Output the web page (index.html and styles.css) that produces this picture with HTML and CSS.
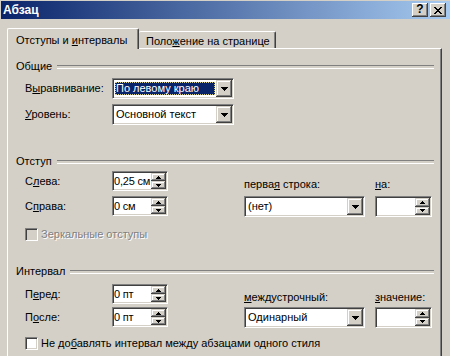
FILE: index.html
```html
<!DOCTYPE html>
<html lang="ru">
<head>
<meta charset="UTF-8">
<title>Абзац</title>
<link rel="stylesheet" href="styles.css">
</head>
<body>
<div class="window">
  <div class="titlebar">
    <span class="title">Абзац</span>
    <div class="caption-btns">
      <span class="cap-btn help">?</span>
      <span class="cap-btn close">
        <svg width="8" height="7" viewBox="0 0 8 7"><path d="M0 0h2v1H0z M6 0h2v1H6z M1 1h2v1H1z M5 1h2v1H5z M2 2h4v1H2z M3 3h2v1H3z M2 4h4v1H2z M1 5h2v1H1z M5 5h2v1H5z M0 6h2v1H0z M6 6h2v1H6z"/></svg>
      </span>
    </div>
  </div>

  <div class="tabs">
    <div class="tab active">Отступы и <u>и</u>нтервалы</div>
    <div class="tab">Поло<u>ж</u>ение на странице</div>
  </div>

  <div class="panel">
    <!-- Общие -->
    <div class="group-head"><span>Общие</span></div>
    <div class="fields fields-general">
      <span class="label">В<u>ы</u>равнивание:</span>
      <div class="combo">
        <span class="combo-text selected">По левому краю</span>
        <span class="drop-btn"><svg width="7" height="4" viewBox="0 0 7 4"><path d="M0 0h7v1H0z M1 1h5v1H1z M2 2h3v1H2z M3 3h1v1H3z"/></svg></span>
      </div>
      <span class="label"><u>У</u>ровень:</span>
      <div class="combo">
        <span class="combo-text">Основной текст</span>
        <span class="drop-btn"><svg width="7" height="4" viewBox="0 0 7 4"><path d="M0 0h7v1H0z M1 1h5v1H1z M2 2h3v1H2z M3 3h1v1H3z"/></svg></span>
      </div>
    </div>

    <!-- Отступ -->
    <div class="group-head group-indent"><span>Отступ</span></div>
    <div class="fields fields-pair fields-indent">
      <span class="label">С<u>л</u>ева:</span>
      <div class="spin">
        <span class="spin-text">0,25 см</span>
        <span class="spin-btns">
          <span class="spin-btn"><svg width="5" height="3" viewBox="0 0 5 3"><path d="M2 0h1v1H2z M1 1h3v1H1z M0 2h5v1H0z"/></svg></span>
          <span class="spin-btn"><svg width="5" height="3" viewBox="0 0 5 3"><path d="M0 0h5v1H0z M1 1h3v1H1z M2 2h1v1H2z"/></svg></span>
        </span>
      </div>
      <span class="label top-label col-combo">перва<u>я</u> строка:</span>
      <span class="label top-label col-spin"><u>н</u>а:</span>

      <span class="label">С<u>п</u>рава:</span>
      <div class="spin">
        <span class="spin-text">0 см</span>
        <span class="spin-btns">
          <span class="spin-btn"><svg width="5" height="3" viewBox="0 0 5 3"><path d="M2 0h1v1H2z M1 1h3v1H1z M0 2h5v1H0z"/></svg></span>
          <span class="spin-btn"><svg width="5" height="3" viewBox="0 0 5 3"><path d="M0 0h5v1H0z M1 1h3v1H1z M2 2h1v1H2z"/></svg></span>
        </span>
      </div>
      <div class="combo col-combo">
        <span class="combo-text">(нет)</span>
        <span class="drop-btn"><svg width="7" height="4" viewBox="0 0 7 4"><path d="M0 0h7v1H0z M1 1h5v1H1z M2 2h3v1H2z M3 3h1v1H3z"/></svg></span>
      </div>
      <div class="spin spin-tall col-spin">
        <span class="spin-text"></span>
        <span class="spin-btns">
          <span class="spin-btn"><svg width="5" height="3" viewBox="0 0 5 3"><path d="M2 0h1v1H2z M1 1h3v1H1z M0 2h5v1H0z"/></svg></span>
          <span class="spin-btn"><svg width="5" height="3" viewBox="0 0 5 3"><path d="M0 0h5v1H0z M1 1h3v1H1z M2 2h1v1H2z"/></svg></span>
        </span>
      </div>
    </div>
    <div class="check check-mirror disabled">
      <span class="box"></span>
      <span class="check-text">Зеркальные отступы</span>
    </div>

    <!-- Интервал -->
    <div class="group-head group-spacing"><span>Интервал</span></div>
    <div class="fields fields-pair fields-spacing">
      <span class="label">П<u>е</u>ред:</span>
      <div class="spin">
        <span class="spin-text">0 пт</span>
        <span class="spin-btns">
          <span class="spin-btn"><svg width="5" height="3" viewBox="0 0 5 3"><path d="M2 0h1v1H2z M1 1h3v1H1z M0 2h5v1H0z"/></svg></span>
          <span class="spin-btn"><svg width="5" height="3" viewBox="0 0 5 3"><path d="M0 0h5v1H0z M1 1h3v1H1z M2 2h1v1H2z"/></svg></span>
        </span>
      </div>
      <span class="label top-label col-combo"><u>м</u>еждустрочный:</span>
      <span class="label top-label col-spin"><u>з</u>начение:</span>

      <span class="label">П<u>о</u>сле:</span>
      <div class="spin">
        <span class="spin-text">0 пт</span>
        <span class="spin-btns">
          <span class="spin-btn"><svg width="5" height="3" viewBox="0 0 5 3"><path d="M2 0h1v1H2z M1 1h3v1H1z M0 2h5v1H0z"/></svg></span>
          <span class="spin-btn"><svg width="5" height="3" viewBox="0 0 5 3"><path d="M0 0h5v1H0z M1 1h3v1H1z M2 2h1v1H2z"/></svg></span>
        </span>
      </div>
      <div class="combo col-combo">
        <span class="combo-text">Одинарный</span>
        <span class="drop-btn"><svg width="7" height="4" viewBox="0 0 7 4"><path d="M0 0h7v1H0z M1 1h5v1H1z M2 2h3v1H2z M3 3h1v1H3z"/></svg></span>
      </div>
      <div class="spin spin-tall col-spin">
        <span class="spin-text"></span>
        <span class="spin-btns">
          <span class="spin-btn"><svg width="5" height="3" viewBox="0 0 5 3"><path d="M2 0h1v1H2z M1 1h3v1H1z M0 2h5v1H0z"/></svg></span>
          <span class="spin-btn"><svg width="5" height="3" viewBox="0 0 5 3"><path d="M0 0h5v1H0z M1 1h3v1H1z M2 2h1v1H2z"/></svg></span>
        </span>
      </div>
    </div>
    <div class="check check-style">
      <span class="box"></span>
      <span class="check-text">Не до<u>б</u>авлять интервал между абзацами одного стиля</span>
    </div>
  </div>
</div>
</body>
</html>
```

FILE: styles.css
```css
* {
  box-sizing: border-box;
}

html, body {
  margin: 0;
  padding: 0;
}

body {
  width: 450px;
  height: 356px;
  overflow: hidden;
  background: #d4d0c8;
  color: #000;
  font-family: "Liberation Sans", Arial, sans-serif;
  font-size: 11px;
  line-height: 13px;
}

u {
  text-decoration: underline;
  text-underline-offset: 1px;
}

.window {
  padding: 1px 0 0 1px;
}

/* title bar */
.titlebar {
  height: 18px;
  display: flex;
  align-items: center;
  justify-content: space-between;
  padding: 0 4px 0 2px;
  background: linear-gradient(to right, #0a246a, #a6caf0);
}

.title {
  color: #fff;
  font-weight: bold;
  font-size: 12px;
}

.caption-btns {
  display: flex;
  gap: 2px;
}

.cap-btn {
  width: 16px;
  height: 14px;
  display: flex;
  align-items: center;
  justify-content: center;
  background: #d4d0c8;
  box-shadow: inset -1px -1px #404040, inset 1px 1px #fff, inset -2px -2px #808080;
}

.help {
  font-weight: bold;
  font-size: 12px;
  padding-bottom: 1px;
}

.close svg {
  display: block;
  margin-left: -1px;
}

/* tabs */
.tabs {
  display: flex;
  align-items: flex-end;
  height: 20px;
  margin-top: 9px;
  padding-left: 6px;
  position: relative;
  z-index: 1;
}

.tab {
  height: 17px;
  padding: 3px 0 0 7px;
  border-top: 1px solid #fff;
  border-left: 1px solid #fff;
  border-right: 1px solid #404040;
  border-radius: 2px 2px 0 0;
  box-shadow: inset -1px 0 #808080;
  white-space: nowrap;
  width: 137px;
}

.tab.active {
  width: 132px;
  height: 21px;
  margin-bottom: -1px;
  padding: 5px 0 0 8px;
  background: #d4d0c8;
}

.tab.active + .tab {
  border-left: none;
}

/* page */
.panel {
  margin-left: 6px;
  width: 435px;
  height: 320px;
  padding: 11px 7px 0 8px;
  border-top: 1px solid #fff;
  border-left: 1px solid #fff;
  border-right: 1px solid #404040;
  box-shadow: inset -1px 0 #808080;
}

.group-head {
  display: flex;
  align-items: center;
  gap: 5px;
  height: 13px;
}

.group-head::after {
  content: "";
  flex: 1;
  height: 2px;
  border-top: 1px solid #808080;
  border-bottom: 1px solid #fff;
}

.group-indent {
  margin-top: 30px;
}

.group-spacing {
  margin-top: 24px;
}

.fields {
  display: grid;
  margin-left: 9px;
  align-items: center;
}

.fields-general {
  grid-template-columns: 87px 122px;
  grid-template-rows: 21px 21px;
  row-gap: 5px;
  margin-top: 5px;
}

.fields-pair {
  grid-template-columns: 87px 56px 76px 121px 10px 57px;
  grid-template-rows: 20px 21px;
}

.fields-indent {
  row-gap: 5px;
  margin-top: 3px;
}

.fields-spacing {
  row-gap: 3px;
  margin-top: 6px;
}

.label {
  white-space: nowrap;
}

.top-label {
  align-self: end;
}

.col-combo {
  grid-column: 4;
}

.col-spin {
  grid-column: 6;
}

/* sunken edit fields */
.combo,
.spin {
  display: flex;
  background: #fff;
  border: 1px solid;
  border-color: #808080 #fff #fff #808080;
  box-shadow: inset 1px 1px #404040, inset -1px -1px #d4d0c8;
  padding: 1px;
}

.combo {
  height: 21px;
}

.spin {
  height: 20px;
  align-self: start;
}

.spin-tall {
  height: 21px;
}

.combo-text,
.spin-text {
  flex: 1;
  min-width: 0;
  display: flex;
  align-items: center;
  white-space: nowrap;
}

.combo-text {
  padding-left: 2px;
  overflow: hidden;
}

.spin-text {
  letter-spacing: -0.2px;
}

.combo-text.selected {
  margin: 2px 1px 2px 1px;
  padding-left: 1px;
  background: #0a246a;
  color: #fff;
  outline: 1px dotted #d8d090;
  outline-offset: -1px;
}

/* raised buttons */
.drop-btn,
.spin-btn {
  display: flex;
  align-items: center;
  justify-content: center;
  background: #d4d0c8;
  box-shadow: inset -1px -1px #404040, inset 1px 1px #d4d0c8, inset -2px -2px #808080, inset 2px 2px #fff;
}

.drop-btn {
  width: 16px;
  height: 17px;
}

.drop-btn svg,
.spin-btn svg {
  display: block;
}

.spin-btns {
  width: 15px;
  flex: none;
  display: flex;
  flex-direction: column;
}

.spin-btn {
  flex: 1;
}

/* check boxes */
.check {
  display: flex;
  align-items: center;
  gap: 3px;
  margin-left: 9px;
  height: 13px;
  white-space: nowrap;
}

.check-mirror {
  margin-top: 11px;
}

.check-style {
  margin-top: 9px;
}

.box {
  width: 13px;
  height: 13px;
  background: #fff;
  border: 1px solid;
  border-color: #808080 #fff #fff #808080;
  box-shadow: inset 1px 1px #404040, inset -1px -1px #d4d0c8;
}

.check.disabled .box {
  background: #d4d0c8;
}

.check.disabled .check-text {
  color: #808080;
  text-shadow: 1px 1px #fff;
}
```
